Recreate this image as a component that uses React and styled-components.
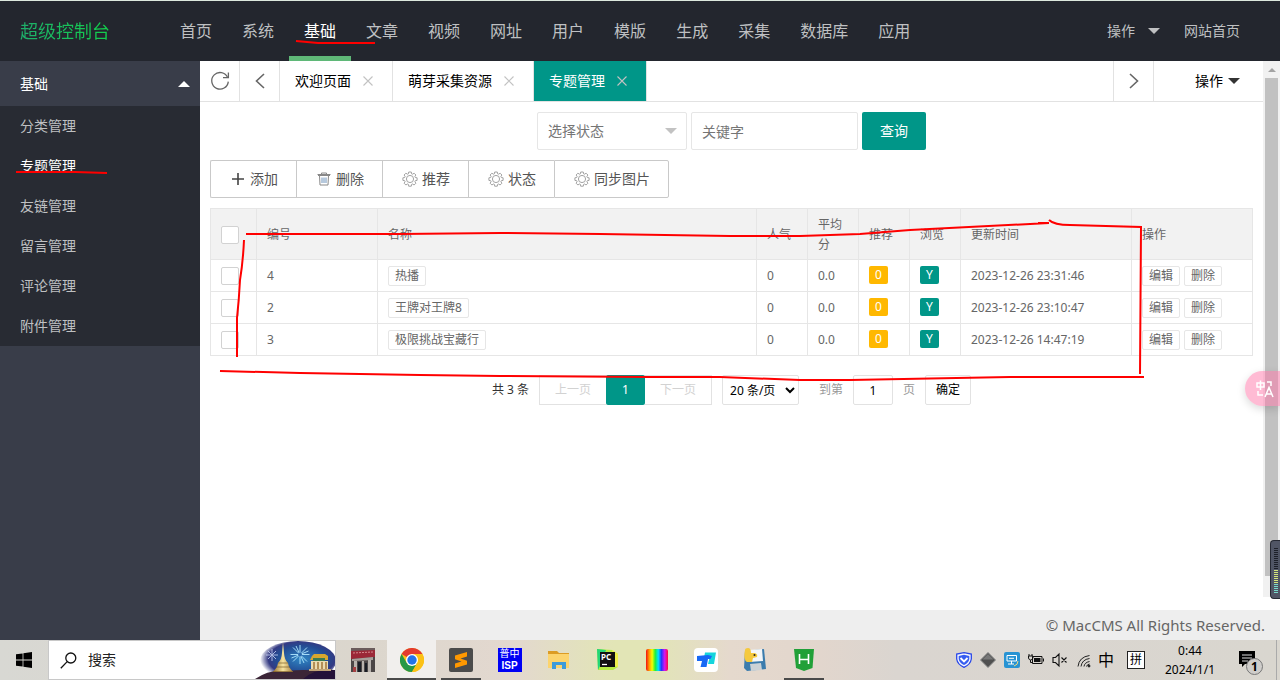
import React, { useState } from "react";
import styled, { createGlobalStyle, css } from "styled-components";

const navItems = [
  "首页",
  "系统",
  "基础",
  "文章",
  "视频",
  "网址",
  "用户",
  "模版",
  "生成",
  "采集",
  "数据库",
  "应用",
];

const sideItems = [
  "分类管理",
  "专题管理",
  "友链管理",
  "留言管理",
  "评论管理",
  "附件管理",
];

const tabs = ["欢迎页面", "萌芽采集资源", "专题管理"];

const rows = [
  { id: 4, name: "热播", time: "2023-12-26 23:31:46" },
  { id: 2, name: "王牌对王牌8", time: "2023-12-26 23:10:47" },
  { id: 3, name: "极限挑战宝藏行", time: "2023-12-26 14:47:19" },
];

const RefreshIcon = () => (
  <svg width="20" height="20" viewBox="0 0 20 20" fill="none" stroke="#666" strokeWidth="1.3">
    <path d="M17.6 6.4A8.3 8.3 0 1 0 18.3 10.6" />
    <path d="M18.4 1.6V6.6H13" />
  </svg>
);

const Chevron = ({ right }) => (
  <svg width="12" height="18" viewBox="0 0 12 18" fill="none" stroke="#666" strokeWidth="1.6">
    <path d={right ? "M2 2L9.5 9L2 16" : "M10 2L2.500 9L10 16"} />
  </svg>
);

const CloseIcon = () => (
  <svg width="10" height="10" viewBox="0 0 10 10" fill="none" stroke="currentColor" strokeWidth="1.1">
    <path d="M0.500 0.500L9.500 9.500M9.500 0.500L0.500 9.500" />
  </svg>
);

const PlusIcon = () => (
  <svg width="14" height="14" viewBox="0 0 14 14" stroke="#444" strokeWidth="1.6">
    <path d="M7 1V13M1 7H13" />
  </svg>
);

const TrashIcon = () => (
  <svg width="14" height="14" viewBox="0 0 14 14" fill="none" stroke="#888" strokeWidth="1">
    <path d="M0.500 2.500H13.500M4.500 2.500V1H9.500V2.500M2.500 3.500L3 13H11L11.500 3.500M1 3.500H13" />
    <path d="M5 5.500V11M7 5.500V11M9 5.500V11" stroke="#6f93bb" />
  </svg>
);

const GearIcon = () => (
  <svg width="16" height="16" viewBox="0 0 16 16" fill="none" stroke="#999" strokeWidth="0.900">
    <circle cx="8" cy="8" r="3.600" />
    <path d="M6.700 1h2.600l.3 1.800 1 .4 1.500-1 1.800 1.800-1 1.500.4 1 1.800.3v2.600l-1.800.3-.4 1 1 1.500-1.800 1.800-1.500-1-1 .4-.3 1.800H6.700l-.3-1.800-1-.4-1.500 1-1.800-1.800 1-1.500-.4-1L.9 9.400V6.800l1.800-.3.4-1-1-1.500 1.800-1.800 1.500 1 1-.4z" />
  </svg>
);

const WindowsIcon = () => (
  <svg width="16" height="16" viewBox="0 0 16 16" fill="#000">
    <path d="M0 2.300L6.600 1.400V7.600H0zM7.400 1.300L16 0V7.600H7.400zM0 8.400H6.600V14.600L0 13.700zM7.400 8.400H16V16L7.400 14.800z" />
  </svg>
);

const SearchIcon = () => (
  <svg width="17" height="17" viewBox="0 0 17 17" fill="none" stroke="#111" strokeWidth="1.300">
    <circle cx="10.800" cy="6" r="5" />
    <path d="M7.200 9.600L0.800 16.200" />
  </svg>
);

const FestivalArt = () => (
  <svg width="80" height="38" viewBox="0 0 80 38">
    <defs>
      <radialGradient id="night" cx="0.55" cy="0.45" r="0.55">
        <stop offset="0" stopColor="#2f86c4" />
        <stop offset="0.6" stopColor="#234b93" />
        <stop offset="0.8" stopColor="#343a83" />
        <stop offset="1" stopColor="#343a83" stopOpacity="0" />
      </radialGradient>
      <linearGradient id="gold" x1="0" x2="1">
        <stop offset="0" stopColor="#9b742f" />
        <stop offset="0.5" stopColor="#f7e4a0" />
        <stop offset="1" stopColor="#a67d3c" />
      </linearGradient>
    </defs>
    <ellipse cx="43" cy="20" rx="38" ry="20" fill="url(#night)" />
    <g stroke="#c9d5f5" strokeWidth="1">
      <path d="M17 8V20M11 14H23M13 10L21 18M21 10L13 18" opacity="0.8" />
      <path d="M45 4V23M35.500 13.500H54.500M38 6.500L52 20.500M52 6.500L38 20.500M41 5L49 22M36.500 17L53.500 10" stroke="#a4dbf7" />
    </g>
    <circle cx="45" cy="13.500" r="2" fill="#2a68ac" />
    <path d="M0 38Q14 28 32 30Q54 27 80 32V38z" fill="#3b2537" />
    <path d="M48 38Q60 27 80 29V38z" fill="#241239" />
    <path d="M28 1L29 12Q29.500 19 33 22L34 26L38 31H18L22 26L23 22Q26.500 19 27 12z" fill="url(#gold)" />
    <path d="M21 26H35M23 22H33M18 30.500H38" stroke="#80602a" strokeWidth="0.700" />
    <path d="M57 15L59 13H70L73 15V19H55z" fill="#d7a72e" />
    <path d="M58 17H70V20H58z" fill="#397b52" />
    <path d="M56 20H73V29H56z" fill="#eadab0" />
    <path d="M59 21V28M63 21V28M67 21V28M71 21V28" stroke="#a17639" strokeWidth="1.500" />
    <path d="M54 28H76V30H54z" fill="#c0a477" />
  </svg>
);

const StoreIcon = () => (
  <svg width="24" height="24" viewBox="0 0 24 24">
    <path d="M0 0H24V24H0z" fill="#4b4646" />
    <path d="M0 0H24V3H0z" fill="#6b5c5c" />
    <path d="M0 3L24 2V9L0 11z" fill="#9b2837" />
    <path d="M2 5L22 4" stroke="#d58b8f" strokeDasharray="2 1" />
    <path d="M1 11L22 9V12L1 13z" fill="#a89f9a" />
    <path d="M3 13H6V24H3zM11 13H13V24H11zM17 12H20V24H17z" fill="#b8b3ae" />
    <path d="M7 14H10V24H7zM14 15H16V24H14z" fill="#181d25" />
    <path d="M2 19H5V24H2z" fill="#a54042" />
  </svg>
);

const ChromeIcon = () => (
  <svg width="24" height="24" viewBox="0 0 24 24">
    <circle cx="12" cy="12" r="12" fill="#fbc116" />
    <path d="M12 12L1.600 6A12 12 0 0 1 22.400 6L12 6z" fill="#e33b2e" />
    <path d="M1.600 6A12 12 0 0 0 12 24L17.200 15L6.800 15z" fill="#279847" />
    <path d="M12 6H22.400A12 12 0 0 1 12 24L17.200 15z" fill="#fbc116" />
    <circle cx="12" cy="12" r="6" fill="#fff" />
    <circle cx="12" cy="12" r="4.700" fill="#2374e8" />
  </svg>
);

const SublimeIcon = () => (
  <svg width="24" height="24" viewBox="0 0 24 24">
    <rect width="24" height="24" rx="2" fill="#4b4b4b" />
    <path d="M18 4V8.500L11.500 10.500L18 12.800V16.500L6 20V15.600L12.500 13.500L6 11.200V7.500z" fill="#ff9800" />
  </svg>
);

const FolderIcon = () => (
  <svg width="24" height="24" viewBox="0 0 24 24">
    <path d="M1 3H10L12 5H22V8H1z" fill="#dc9c24" />
    <path d="M1 6H22V20H1z" fill="#fcd46d" />
    <path d="M5 14H19V21H15V17H9V21H5z" fill="#3d9bda" />
  </svg>
);

const PycharmIcon = () => (
  <svg width="24" height="24" viewBox="0 0 24 24">
    <path d="M1 1L16 2L22 6V19L17 22H2z" fill="#b7ed45" />
    <path d="M1 1L10 2L4 18L2 22z" fill="#22d677" />
    <path d="M16 2L22 6V19L18 18z" fill="#eff04c" />
    <path d="M4 4H19V19H4z" fill="#111" />
    <text x="5" y="12" fontSize="8" fontWeight="700" fill="#fff" fontFamily="Noto Sans">PC</text>
    <path d="M6 16.500H11" stroke="#fff" strokeWidth="1.300" />
  </svg>
);

const RainbowIcon = () => (
  <svg width="24" height="24" viewBox="0 0 24 24">
    <defs>
      <linearGradient id="rainbow">
        <stop offset="0" stopColor="#f51010" />
        <stop offset="0.15" stopColor="#ff9d00" />
        <stop offset="0.28" stopColor="#f5ff00" />
        <stop offset="0.42" stopColor="#20ef39" />
        <stop offset="0.56" stopColor="#00e3ff" />
        <stop offset="0.7" stopColor="#2432ff" />
        <stop offset="0.85" stopColor="#d615ef" />
        <stop offset="1" stopColor="#ff0b38" />
      </linearGradient>
    </defs>
    <rect x="1" y="1" width="22" height="22" rx="2" fill="url(#rainbow)" />
  </svg>
);

const TodeskIcon = () => (
  <svg width="24" height="24" viewBox="0 0 24 24">
    <rect width="24" height="24" rx="4" fill="#fff" />
    <path d="M11 4.500H22L20 16H14L15.500 10H10z" fill="#15d5dc" />
    <path d="M3 8L14 7L18 8L16.500 11H14L12.500 19H6.500L8 13H3z" fill="#1768f5" />
  </svg>
);

const DiskIcon = () => (
  <svg width="24" height="24" viewBox="0 0 24 24">
    <path d="M2 3L21 1L23 21L4 23L1 20z" fill="#3b7cad" />
    <path d="M5 2L19 1L20 13L6 14z" fill="#f3f6f8" />
    <path d="M7 16L18 15L19 22L8 23z" fill="#cbd2d6" />
    <path d="M2 2Q2 0 5 0Q8 0 8 5H12Q15 6 14 9L10 10L9 14H4Q0 12 2 2z" fill="#f5c93d" />
    <circle cx="11.500" cy="7" r="1" fill="#222" />
  </svg>
);

const HbuilderIcon = () => (
  <svg width="24" height="24" viewBox="0 0 24 24">
    <path d="M2 1H22L20.500 20L12 23L4 20z" fill="#21a038" />
    <path d="M7.500 6V16M16.500 6V16M7.500 11.500H16.500" stroke="#fff" strokeWidth="1.600" />
  </svg>
);

const ShieldIcon = () => (
  <svg width="16" height="16" viewBox="0 0 16 16" fill="none" stroke="#2947e8" strokeWidth="1.300">
    <path d="M8 0.700L15.300 2V7Q14.500 12.500 8 15.300Q1.500 12.500 0.700 7V2z" fill="#f5f7ff" />
    <path d="M8 2.700L13.300 4V7Q12.500 11 8 13Q3.500 11 2.700 7V4z" fill="#365df0" stroke="none" />
    <path d="M4.500 6L8 9.500L11.500 6" stroke="#fff" strokeWidth="1.800" />
  </svg>
);

const DiamondIcon = () => (
  <svg width="16" height="16" viewBox="0 0 16 16">
    <path d="M8 0.500L15.500 8L8 15.500L0.500 8z" fill="#505050" stroke="#888" />
    <path d="M8 2L13.500 7.500H2.500z" fill="#777" />
  </svg>
);

const MonitorIcon = () => (
  <svg width="16" height="16" viewBox="0 0 16 16" fill="none" stroke="#fff">
    <rect width="16" height="16" rx="2" fill="#2793d3" stroke="none" />
    <path d="M3 3.500H12.500V9H3zM7.500 9V12M4 12H10M5 6.300H10" />
    <path d="M10 14Q14 13 14 9" stroke="#efd87c" />
  </svg>
);

const BatteryIcon = () => (
  <svg width="16" height="16" viewBox="0 0 16 16">
    <path d="M4.500 4.500H14V11.500H4.500z" fill="none" stroke="#111" />
    <path d="M6 6H12.500V10H6z" fill="#111" />
    <path d="M15.500 6.500V9.500M1 2V4M4 2V4M0.500 4H5V6Q4 8 2.500 8Q1 8 0.500 6zM2.500 8V10.500H4" fill="none" stroke="#111" />
  </svg>
);

const MuteIcon = () => (
  <svg width="16" height="16" viewBox="0 0 16 16" fill="none" stroke="#111" strokeWidth="1.100">
    <path d="M1 5.500H3.500L7 2V14L3.500 10.500H1zM9.500 5.500L14.500 10.500M14.500 5.500L9.500 10.500" />
  </svg>
);

const WifiIcon = () => (
  <svg width="16" height="16" viewBox="0 0 16 16" fill="none" stroke="#222">
    <path d="M2 14.500Q3 5 13.500 3.500M5 14.500Q6 7.500 13.500 6.500M8 14.500Q8.500 10.500 13.500 9.500M10.500 14.500Q11 12.500 13.500 12" />
    <circle cx="13" cy="14" r="1" fill="#222" />
  </svg>
);

const NoticeIcon = () => (
  <svg width="24" height="24" viewBox="0 0 24 24">
    <path d="M0 0H16V13H6L3 16V13H0z" fill="#000" />
    <path d="M3 4H13M3 7H13M3 10H9" stroke="#ddd" />
    <circle cx="15.500" cy="15.500" r="8" fill="#cfcdca" stroke="#777" />
    <text x="15.500" y="20" textAnchor="middle" fontSize="12" fontWeight="700" fontFamily="Noto Sans">1</text>
  </svg>
);

const RedMarks = () => (
  <Marks viewBox="0 0 1280 680" aria-hidden="true">
    <path d="M296 41L318 43L375 43" />
    <path d="M16 172L75 172L107 173" />
    <path d="M246 234L400 234L500 233L600 234L730 236L800 236L860 234L910 230L1049 223L1038 223M1049 220Q1054 225 1070 225L1141 227L1140 374" />
    <path d="M244 240Q243 262 240 280Q239 300 237 318L237 357" />
    <path d="M220 371L300 373L420 375L500 376L650 377L720 377L800 380L850 380L1010 377L1144 377" />
  </Marks>
);

const taskApps = [
  { name: "Store", icon: <StoreIcon /> },
  { name: "Chrome", icon: <ChromeIcon />, active: true },
  { name: "Sublime Text", icon: <SublimeIcon />, open: true },
  { name: "ISP", isp: true },
  { name: "Explorer", icon: <FolderIcon /> },
  { name: "PyCharm", icon: <PycharmIcon /> },
  { name: "Colors", icon: <RainbowIcon /> },
  { name: "ToDesk", icon: <TodeskIcon /> },
  { name: "Python", icon: <DiskIcon /> },
  { name: "HBuilder", icon: <HbuilderIcon />, open: true },
];

const trayIcons = [
  ShieldIcon,
  DiamondIcon,
  MonitorIcon,
  BatteryIcon,
  MuteIcon,
  WifiIcon,
];

const Header = () => (
  <TopBar>
    <Logo>超级控制台</Logo>
    <Nav>
      {navItems.map((text) => (
        <NavLink href="#" key={text} $active={text === "基础"}>
          {text}
        </NavLink>
      ))}
    </Nav>
    <RightMenu>
      <a href="#">
        操作 <Triangle $color="#bfc0c2" />
      </a>
      <a href="#">网站首页</a>
    </RightMenu>
  </TopBar>
);

const Sidebar = () => (
  <Side>
    <SideTitle>
      基础 <Triangle $up $color="#fff" />
    </SideTitle>
    <SideList>
      {sideItems.map((text) => (
        <li key={text}>
          <SideLink href="#" $active={text === "专题管理"}>
            {text}
          </SideLink>
        </li>
      ))}
    </SideList>
  </Side>
);

const TabBar = () => (
  <Tabs>
    <TabTool aria-label="刷新">
      <RefreshIcon />
    </TabTool>
    <TabTool aria-label="左移">
      <Chevron />
    </TabTool>
    {tabs.map((text) => (
      <Tab key={text} $active={text === "专题管理"}>
        <a href="#">{text}</a>
        <TabClose aria-label="关闭">
          <CloseIcon />
        </TabClose>
      </Tab>
    ))}
    <TabSpace />
    <TabTool aria-label="右移">
      <Chevron right />
    </TabTool>
    <TabAction>
      操作 <Triangle $color="#333" />
    </TabAction>
  </Tabs>
);

const TopicTable = () => (
  <Table>
    <colgroup>
      <Col $w={46} />
      <Col $w={121} />
      <col />
      <Col $w={51} />
      <Col $w={51} />
      <Col $w={51} />
      <Col $w={51} />
      <Col $w={171} />
      <Col $w={121} />
    </colgroup>
    <thead>
      <tr>
        <th>
          <Checkbox aria-label="全选" />
        </th>
        <th>编号</th>
        <th>名称</th>
        <th>人气</th>
        <th>平均分</th>
        <th>推荐</th>
        <th>浏览</th>
        <th>更新时间</th>
        <th>操作</th>
      </tr>
    </thead>
    <tbody>
      {rows.map(({ id, name, time }) => (
        <tr key={id}>
          <td>
            <Checkbox aria-label={name} />
          </td>
          <td>{id}</td>
          <td>
            <MiniLink href="#">{name}</MiniLink>
          </td>
          <td>0</td>
          <td>0.0</td>
          <td>
            <Badge href="#" $color="#ffb800">
              0
            </Badge>
          </td>
          <td>
            <Badge href="#" $color="#009688">
              Y
            </Badge>
          </td>
          <td>{time}</td>
          <td>
            <Actions>
              <MiniLink href="#">编辑</MiniLink>
              <MiniLink href="#">删除</MiniLink>
            </Actions>
          </td>
        </tr>
      ))}
    </tbody>
  </Table>
);

const Pagination = () => {
  const [page, setPage] = useState("1");

  return (
    <Pager>
      <PagerText>共 3 条</PagerText>
      <PageButtons>
        <button disabled>上一页</button>
        <CurrentPage aria-current="page">1</CurrentPage>
        <button disabled>下一页</button>
      </PageButtons>
      <PageSize aria-label="每页条数">
        <option>20 条/页</option>
      </PageSize>
      <JumpLabel>
        到第
        <PageInput value={page} onChange={(e) => setPage(e.target.value)} />
        页
      </JumpLabel>
      <ConfirmButton>确定</ConfirmButton>
    </Pager>
  );
};

const Taskbar = () => (
  <TaskBar>
    <StartButton aria-label="开始">
      <WindowsIcon />
    </StartButton>
    <TaskSearch>
      <SearchIcon />
      <input placeholder="搜索" aria-label="搜索" />
      <FestivalArt />
    </TaskSearch>
    <TaskApps>
      {taskApps.map(({ name, icon, active, open, isp }) => (
        <TaskApp key={name} aria-label={name} $active={active} $open={open}>
          {isp ? (
            <IspIcon>
              <span>普中</span>
              <b>ISP</b>
            </IspIcon>
          ) : (
            icon
          )}
        </TaskApp>
      ))}
    </TaskApps>
    <Tray>
      {trayIcons.map((Icon, index) => (
        <TraySlot key={index}>
          <Icon />
        </TraySlot>
      ))}
      <Language>中</Language>
      <Pinyin>拼</Pinyin>
      <Clock>
        <span>0:44</span>
        <span>2024/1/1</span>
      </Clock>
      <Notice aria-label="通知">
        <NoticeIcon />
      </Notice>
    </Tray>
  </TaskBar>
);

const App = () => {
  return (
    <Screen>
      <GlobalStyle />
      <Header />
      <Body>
        <Sidebar />
        <Main>
          <Frame>
            <Page>
              <TabBar />
              <SearchForm onSubmit={(e) => e.preventDefault()}>
                <SelectBox>
                  <select aria-label="选择状态">
                    <option>选择状态</option>
                  </select>
                  <Triangle $color="#c2c2c2" />
                </SelectBox>
                <KeywordInput placeholder="关键字" aria-label="关键字" />
                <QueryButton>查询</QueryButton>
              </SearchForm>
              <ButtonGroup>
                <ToolButton>
                  <PlusIcon />
                  添加
                </ToolButton>
                <ToolButton>
                  <TrashIcon />
                  删除
                </ToolButton>
                <ToolButton>
                  <GearIcon />
                  推荐
                </ToolButton>
                <ToolButton>
                  <GearIcon />
                  状态
                </ToolButton>
                <ToolButton>
                  <GearIcon />
                  同步图片
                </ToolButton>
              </ButtonGroup>
              <TableWrap>
                <TopicTable />
              </TableWrap>
              <Pagination />
            </Page>
            <Scrollbar>
              <ScrollArrow />
              <ScrollThumb />
            </Scrollbar>
          </Frame>
          <Footer>© MacCMS All Rights Reserved.</Footer>
        </Main>
      </Body>
      <Taskbar />
      <Translate aria-label="翻译">
        <svg width="18" height="18" viewBox="0 0 18 18" fill="none" stroke="#fff" strokeWidth="1.500">
          <path d="M1 3H8V7H1zM4.500 0.500V10M11 2H15V6M2 11V15H7M9 17L13 7.500L17 17M10.500 14H15.500" />
        </svg>
      </Translate>
      <Meter>
        <svg width="5" height="46" viewBox="0 0 5 46">
          <path d="M2 0V22" stroke="#1d2029" strokeWidth="4" strokeDasharray="1 1" />
          <path d="M2 22V36" stroke="#d3e67c" strokeWidth="4" strokeDasharray="1 1" />
          <path d="M2 36V46" stroke="#79d9ca" strokeWidth="4" strokeDasharray="1 1" />
        </svg>
      </Meter>
      <RedMarks />
    </Screen>
  );
};

export default App;

const GlobalStyle = createGlobalStyle`
  * {
    box-sizing: border-box;
  }

  body {
    margin: 0;
    background: #fff;
    font: 14px/24px "Noto Sans", "Noto Sans CJK SC", sans-serif;
    color: #666;
  }

  button, input, select {
    margin: 0;
    font: inherit;
    color: inherit;
    outline: none;
  }

  button {
    padding: 0;
    border: 0;
    background: none;
    cursor: pointer;
  }

  a {
    color: inherit;
    text-decoration: none;
  }

  svg {
    flex-shrink: 0;
  }
`;

const Screen = styled.div`
  position: relative;
  display: flex;
  flex-direction: column;
  min-height: 100vh;
  overflow: hidden;
`;

const Triangle = styled.i`
  width: 0;
  border: 6px solid transparent;
  ${(props) =>
    props.$up
      ? css`
          border-top: 0;
          border-bottom-color: ${props.$color};
        `
      : css`
          border-bottom: 0;
          border-top-color: ${props.$color};
        `}
`;

const TopBar = styled.header`
  display: flex;
  height: 61px;
  padding: 0 40px 0 20px;
  border-top: 1px solid #dce8dd;
  background: #23262e;
  color: #bfc0c2;
`;

const Logo = styled.div`
  width: 145px;
  font-size: 18px;
  line-height: 60px;
  color: transparent;
  background: linear-gradient(90deg, #1fae6b, #12d04b 90px);
  background-clip: text;
`;

const Nav = styled.nav`
  display: flex;
  flex: 1;
`;

const NavLink = styled.a`
  padding: 0 15px;
  border-bottom: 5px solid ${(props) => (props.$active ? "#5fb878" : "transparent")};
  font-size: 16px;
  line-height: 60px;
  color: ${(props) => (props.$active ? "#fff" : "inherit")};
`;

const RightMenu = styled.div`
  display: flex;
  gap: 24px;
  line-height: 60px;

  a {
    display: flex;
    align-items: center;
    gap: 13px;
  }
`;

const Body = styled.div`
  display: flex;
  flex: 1;
`;

const Side = styled.aside`
  width: 200px;
  background: #393d49;
  color: #bfc0c2;
`;

const SideTitle = styled.div`
  display: flex;
  align-items: center;
  justify-content: space-between;
  height: 45px;
  padding: 0 10px 0 20px;
  color: #fff;
`;

const SideList = styled.ul`
  margin: 0;
  padding: 0;
  background: #282b33;
  list-style: none;
`;

const SideLink = styled.a`
  display: block;
  padding: 0 20px;
  line-height: 40px;
  color: ${(props) => (props.$active ? "#fff" : "inherit")};
`;

const Main = styled.main`
  display: flex;
  flex: 1;
  flex-direction: column;
  min-width: 0;
`;

const Frame = styled.div`
  display: flex;
  flex: 1;
`;

const Page = styled.div`
  flex: 1;
  min-width: 0;
`;

const Tabs = styled.div`
  display: flex;
  height: 41px;
  border-bottom: 1px solid #e2e2e2;
  color: #000;
`;

const TabTool = styled.button`
  display: flex;
  align-items: center;
  justify-content: center;
  width: 40px;
  border-right: 1px solid #e2e2e2;
`;

const Tab = styled.div`
  display: flex;
  align-items: center;
  gap: 9px;
  padding: 0 16px 0 15px;
  border-right: 1px solid #e2e2e2;
  background: ${(props) => (props.$active ? "#009688" : "#fff")};
  color: ${(props) => (props.$active ? "#fff" : "#000")};
`;

const TabClose = styled.button`
  display: flex;
  justify-content: center;
  width: 16px;
  color: #c2c2c2;
`;

const TabSpace = styled.div`
  flex: 1;
  border-right: 1px solid #e2e2e2;
`;

const TabAction = styled.button`
  display: flex;
  align-items: center;
  justify-content: flex-end;
  gap: 5px;
  width: 109px;
  padding-right: 23px;
`;

const SearchForm = styled.form`
  display: flex;
  justify-content: center;
  gap: 4px;
  margin: 10px 10px;
`;

const fieldStyle = css`
  height: 38px;
  padding: 0 10px;
  border: 1px solid #e6e6e6;
  border-radius: 2px;
  background: #fff;
  color: #757575;
`;

const SelectBox = styled.div`
  position: relative;
  width: 150px;

  select {
    ${fieldStyle}
    width: 100%;
    appearance: none;
  }

  ${Triangle} {
    position: absolute;
    top: 16px;
    right: 10px;
    pointer-events: none;
  }
`;

const KeywordInput = styled.input`
  ${fieldStyle}
  width: 167px;

  &::placeholder {
    color: #757575;
  }
`;

const QueryButton = styled.button`
  width: 64px;
  height: 38px;
  border-radius: 2px;
  background: #009688;
  color: #fff;
`;

const ButtonGroup = styled.div`
  display: flex;
  margin: 0 10px;
`;

const ToolButton = styled.button`
  display: flex;
  align-items: center;
  gap: 4px;
  height: 38px;
  padding: 0 18px 0 19px;
  border: 1px solid #c9c9c9;
  border-right-width: 0;
  color: #555;

  svg {
    width: 16px;
  }

  &:first-child {
    border-radius: 2px 0 0 2px;
  }

  &:last-child {
    border-right-width: 1px;
    border-radius: 0 2px 2px 0;
  }
`;

const TableWrap = styled.div`
  padding: 10px 10px 9px;
`;

const Table = styled.table`
  width: 100%;
  border-collapse: collapse;
  table-layout: fixed;
  font-size: 12px;
  line-height: 20px;

  th,
  td {
    padding: 0 10px;
    border: 1px solid #e6e6e6;
    font-weight: 400;
    text-align: left;
  }

  th {
    height: 51px;
    padding-top: 2px;
    background: #f2f2f2;
  }

  td {
    height: 32px;
  }
`;

const Col = styled.col`
  width: ${(props) => props.$w}px;
`;

const Checkbox = styled.input.attrs({ type: "checkbox" })`
  display: block;
  width: 18px;
  height: 18px;
  border: 1px solid #d2d2d2;
  border-radius: 2px;
  background: #fff;
  appearance: none;

  &:checked {
    background: #5fb878;
  }
`;

const MiniLink = styled.a`
  display: block;
  width: fit-content;
  padding: 0 5px;
  border: 1px solid #e6e6e6;
  border-radius: 2px;
  background: #fff;
  line-height: 18px;
  white-space: nowrap;

  td > & {
    padding: 0 6px;
  }
`;

const Badge = styled.a`
  display: block;
  width: 19px;
  margin-bottom: 1px;
  border-radius: 2px;
  background: ${(props) => props.$color};
  color: #fff;
  line-height: 18px;
  text-align: center;
`;

const Actions = styled.div`
  display: flex;
  gap: 4px;

  ${MiniLink} {
    padding: 0 6px;
  }
`;

const Pager = styled.div`
  display: flex;
  align-items: center;
  justify-content: center;
  gap: 10px;
  padding: 10px;
  font-size: 12px;
  line-height: 28px;
`;

const PagerText = styled.span`
  color: #333;
`;

const PageButtons = styled.div`
  display: flex;

  button {
    width: 67px;
    height: 30px;
    border: 1px solid #e2e2e2;
    color: #d2d2d2;
  }

  button:first-child {
    border-right: 0;
  }

  button:last-child {
    border-left: 0;
  }
`;

const CurrentPage = styled.button`
  && {
    width: 39px;
    border: 0;
    border-radius: 2px;
    background: #009688;
    color: #fff;
  }
`;

const PageSize = styled.select`
  width: 77px;
  height: 30px;
  padding: 0 3px;
  border: 1px solid #e2e2e2;
  border-radius: 2px;
  background: #fff;
  color: #000;
`;

const JumpLabel = styled.label`
  display: flex;
  align-items: center;
  gap: 10px;
  padding-left: 10px;
  color: #999;
`;

const PageInput = styled.input`
  width: 40px;
  height: 30px;
  border: 1px solid #e2e2e2;
  border-radius: 2px;
  color: #000;
  text-align: center;
`;

const ConfirmButton = styled.button`
  width: 46px;
  height: 30px;
  border: 1px solid #e2e2e2;
  border-radius: 2px;
  color: #000;
`;

const Scrollbar = styled.div`
  display: flex;
  flex-direction: column;
  align-items: center;
  width: 17px;
  margin-bottom: 13px;
  padding-bottom: 21px;
  background: #f1f1f1;
`;

const ScrollArrow = styled.i`
  width: 0;
  margin: 7px 0 6px;
  border: 4px solid transparent;
  border-top: 0;
  border-bottom-color: #a3a3a3;
`;

const ScrollThumb = styled.div`
  flex: 1;
  width: 13px;
  background: #c1c1c1;
`;

const Footer = styled.footer`
  height: 30px;
  padding: 0 15px;
  background: #eee;
  font-size: 15px;
  line-height: 30px;
  text-align: right;
`;

const TaskBar = styled.footer`
  display: flex;
  height: 40px;
  background: linear-gradient(
    90deg,
    #d8d8d3 0,
    #dbd6cd 28%,
    #e3d8cf 40%,
    #e2e5b6 48%,
    #e2e5b6 51%,
    #e5d9cd 57%,
    #e2d6cd 64%,
    #dad5d0 70%,
    #d9d6cf 100%
  );
  color: #000;
`;

const StartButton = styled.button`
  display: flex;
  align-items: center;
  justify-content: center;
  width: 48px;
`;

const TaskSearch = styled.div`
  display: flex;
  align-items: center;
  gap: 11px;
  width: 288px;
  padding-left: 11px;
  border: 1px solid #c8c8c8;
  background: #fff;

  input {
    flex: 1;
    min-width: 0;
    padding: 0;
    border: 0;
  }

  input::placeholder {
    color: #222;
  }
`;

const TaskApps = styled.div`
  display: flex;
  padding-left: 2px;
`;

const TaskApp = styled.button`
  display: flex;
  align-items: center;
  justify-content: center;
  width: 49px;
  background: ${(props) => (props.$active ? "#f1efed" : "none")};

  ${(props) =>
    (props.$active || props.$open) &&
    css`
      &::after {
        content: "";
        align-self: flex-end;
        width: ${props.$active ? 49 : 40}px;
        height: 2px;
        margin-left: ${props.$active ? -37 : -32}px;
        margin-right: ${props.$active ? -12 : -8}px;
        background: #4a4a4a;
      }
    `}
`;

const IspIcon = styled.span`
  display: flex;
  flex-direction: column;
  width: 24px;
  height: 24px;
  background: #0000f5;
  color: #fff;
  font-family: "Liberation Sans", "Noto Sans CJK SC", sans-serif;
  font-size: 10px;
  line-height: 12px;
  text-align: center;
`;

const Tray = styled.div`
  display: flex;
  align-items: center;
  margin-left: auto;
  margin-right: 3px;
  padding-right: 7px;
  border-right: 1px solid #aaa;
`;

const TraySlot = styled.span`
  display: flex;
  justify-content: center;
  width: 24px;
`;

const Language = styled.span`
  width: 20px;
  font-size: 16px;
  text-align: center;
`;

const Pinyin = styled.span`
  width: 16px;
  height: 16px;
  margin: 0 11px 0 12px;
  outline: 1px solid #222;
  background: #fff;
  font-size: 12px;
  line-height: 16px;
  text-align: center;
`;

const Clock = styled.div`
  display: flex;
  flex-direction: column;
  width: 70px;
  font-size: 12px;
  line-height: 19px;
  text-align: center;
`;

const Notice = styled.button`
  display: flex;
  align-items: center;
  justify-content: center;
  width: 44px;
  padding: 5px 0 0 7px;
`;

const Translate = styled.button`
  position: absolute;
  top: 371px;
  right: 0;
  display: flex;
  align-items: center;
  width: 35px;
  height: 35px;
  padding-left: 11px;
  border-radius: 18px 0 0 18px;
  background: rgba(255, 120, 170, 0.5);
  box-shadow: 0 3px 8px rgba(0, 0, 0, 0.15);
`;

const Meter = styled.div`
  position: absolute;
  top: 540px;
  right: 0;
  width: 10px;
  height: 59px;
  padding: 7px 0 0 3px;
  border: 1px solid #262933;
  border-right: 0;
  border-radius: 4px 0 0 4px;
  background: #505565;
  line-height: 0;
`;

const Marks = styled.svg`
  position: absolute;
  top: 0;
  left: 0;
  width: 1280px;
  height: 680px;
  fill: none;
  stroke: #f00;
  stroke-width: 2;
  pointer-events: none;
`;
